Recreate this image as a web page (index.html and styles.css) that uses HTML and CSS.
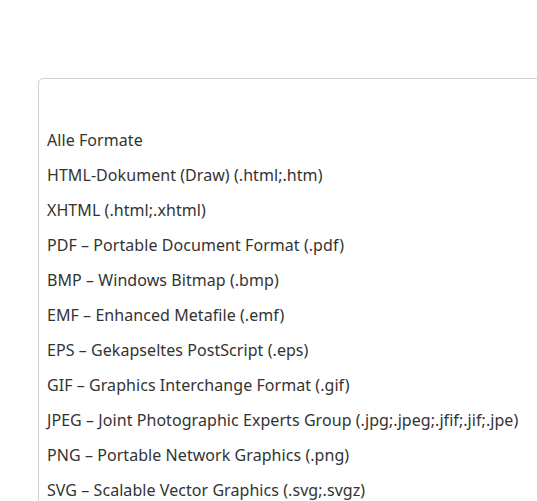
FILE: index.html
```html
<!DOCTYPE html>
<html>
<head>
    <link rel="stylesheet" href="styles.css">
</head>
<body>
    <div class="listbox">
        <div class="option"></div>
        <div class="option">Alle Formate</div>
        <div class="option">HTML-Dokument (Draw) (.html;.htm)</div>
        <div class="option">XHTML (.html;.xhtml)</div>
        <div class="option">PDF – Portable Document Format (.pdf)</div>
        <div class="option">BMP – Windows Bitmap (.bmp)</div>
        <div class="option">EMF – Enhanced Metafile (.emf)</div>
        <div class="option">EPS – Gekapseltes PostScript (.eps)</div>
        <div class="option">GIF – Graphics Interchange Format (.gif)</div>
        <div class="option">JPEG – Joint Photographic Experts Group (.jpg;.jpeg;.jfif;.jif;.jpe)</div>
        <div class="option">PNG – Portable Network Graphics (.png)</div>
        <div class="option">SVG – Scalable Vector Graphics (.svg;.svgz)</div>
    </div>
</body>
</html>
```

FILE: styles.css
```css
html, body {
  margin: 0;
  height: 100%;
  overflow: hidden;
  background: #fff;
}

body {
  font-family: "Noto Sans", sans-serif;
  font-size: 16px;
  letter-spacing: 0.06px;
  color: #333;
  padding: 78px 0 0 38px;
  box-sizing: border-box;
}

.listbox {
  width: 520px;
  border: 1px solid #d0d0d0;
  border-radius: 5px;
  padding: 9px 8px 0;
}

.option {
  height: 35px;
  line-height: 35px;
  white-space: nowrap;
}
```
